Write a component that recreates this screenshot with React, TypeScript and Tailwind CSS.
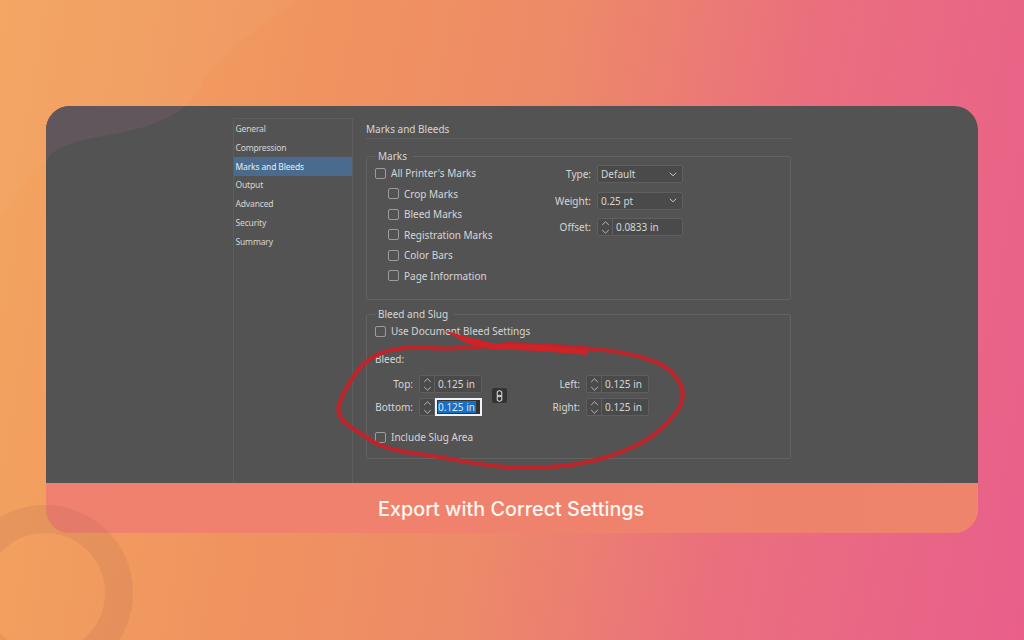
import type { ReactNode } from "react";

const blob =
  "M300 0C270 18 226 50 206 76C197 96 188 106 176 113C142 134 100 134 72 143C56 149 49 154 46 162C30 178 14 196 0 218L0 0Z";

const loop: [number, number][] = [
  [510, 344], [453, 350], [407, 346], [368, 356], [344, 390], [335, 416], [361, 434], [385, 449],
  [440, 457], [507, 469], [575, 466], [625, 452], [662, 431], [688, 397], [670, 366], [625, 352],
  [573, 347], [510, 344],
];

// smooth hand-drawn looking line through the points
const curve = (pts: [number, number][]) => {
  let d = `M${pts[0][0]} ${pts[0][1]}`;
  for (let i = 1; i < pts.length - 1; i++) {
    const mx = (pts[i][0] + pts[i + 1][0]) / 2;
    const my = (pts[i][1] + pts[i + 1][1]) / 2;
    d += `Q${pts[i][0]} ${pts[i][1]} ${mx} ${my}`;
  }
  const last = pts[pts.length - 1];
  return `${d}L${last[0]} ${last[1]}`;
};

const sections = ["General", "Compression", "Marks and Bleeds", "Output", "Advanced", "Security", "Summary"];
const markRows = ["Crop Marks", "Bleed Marks", "Registration Marks", "Color Bars", "Page Information"];

const Check = ({ label, className = "" }: { label: string; className?: string }) => (
  <div className={`flex items-center gap-[5px] ${className}`}>
    <span className="w-[11px] h-[11px] border border-[#9c9c9c] rounded-[2px] shrink-0" />
    <span>{label}</span>
  </div>
);

const Arrows = () => (
  <svg width="9" height="15" viewBox="0 0 9 15" fill="none" stroke="#c4c4c4" strokeWidth="0.9">
    <path d="M1.2 5 4.5 1.8 7.8 5" />
    <path d="M1.2 10 4.5 13.2 7.8 10" />
  </svg>
);

const Spinner = ({ value, active, className = "w-[63px]" }: { value: string; active?: boolean; className?: string }) => (
  <div className={`flex h-[18px] border border-[#5f5f5f] rounded-[2px] bg-[#4a4a4a] relative ${className}`}>
    <div className="w-[15px] flex items-center justify-center border-r border-[#5f5f5f] shrink-0">
      <Arrows />
    </div>
    {active ? (
      <div className="flex-1 -my-px -mr-px flex items-center bg-[#333] border-2 border-[#eef4fa] pl-[1px]">
        <span className="bg-[#1b6fc2] text-[#d8e6f5] leading-[12px] pr-[1px]">{value}</span>
      </div>
    ) : (
      <div className="flex-1 flex items-center pl-[3px]">{value}</div>
    )}
  </div>
);

const Dropdown = ({ value }: { value: string }) => (
  <div className="flex items-center justify-between w-[86px] h-[18px] border border-[#5f5f5f] rounded-[2px] bg-[#4a4a4a] pl-[3px] pr-[5px]">
    <span>{value}</span>
    <svg width="8" height="5" viewBox="0 0 8 5" fill="none" stroke="#c4c4c4" strokeWidth="1">
      <path d="M.8 .8 4 3.8 7.2 .8" />
    </svg>
  </div>
);

const Group = ({ title, className, children }: { title: string; className: string; children: ReactNode }) => (
  <section className={`relative border border-[#626262] rounded-[2px] ${className}`}>
    <span className="absolute -top-[8px] left-[8px] bg-[#535353] pl-[3px] pr-[6px] leading-[14px]">{title}</span>
    {children}
  </section>
);

const Field = ({ label, width, children }: { label: string; width: string; children: ReactNode }) => (
  <div className="flex items-center gap-[6px]">
    <span className={`text-right ${width}`}>{label}</span>
    {children}
  </div>
);

export default function App() {
  return (
    <div className="relative w-[1024px] h-[640px] overflow-hidden pt-[106px] pl-[46px] bg-[linear-gradient(100deg,#f3a55f_0%,#f0935f_30%,#ed8a68_50%,#ea6f7e_72%,#e95f8b_100%)] font-['Noto_Sans',sans-serif]">
      <svg className="absolute inset-0" width="1024" height="640" viewBox="0 0 1024 640">
        <path d={blob} fill="#ffffff" opacity="0.03" />
      </svg>

      <div className="relative w-[932px] h-[427px] rounded-[24px] overflow-hidden bg-[#ef806e]">
        <div className="relative h-[377px] bg-[#535353] text-[#d6d6d6] text-[10px] leading-[14px]">
          <svg className="absolute inset-0" width="932" height="377" viewBox="46 106 932 377">
            <path d={blob} fill="#60565b" />
          </svg>
          <div className="relative flex h-full pl-[187px] pt-[12px]">
            <nav className="w-[120px] border border-b-0 border-[#5e5e5e] pt-[0.5px] text-[8.5px] tracking-[-0.15px]">
              {sections.map((s) => (
                <div
                  key={s}
                  className={`h-[18.85px] flex items-center pl-[1.5px] ${s === "Marks and Bleeds" ? "bg-[#4a6b8e] text-[#e6eef6]" : ""}`}
                >
                  {s}
                </div>
              ))}
            </nav>
            <main className="ml-[13px] w-[425px]">
              <h2 className="h-[21px] flex items-center border-b border-[#5e5e5e] pt-px">Marks and Bleeds</h2>
              <Group title="Marks" className="mt-[17px] h-[144px] flex pl-[8px] pt-[6px]">
                <div className="w-[172px]">
                  <Check label="All Printer's Marks" className="h-[20.5px]" />
                  {markRows.map((m) => (
                    <Check key={m} label={m} className="h-[20.5px] ml-[13px]" />
                  ))}
                </div>
                <div className="flex flex-col gap-[8.5px] pt-[2px] ml-[4px]">
                  <Field label="Type:" width="w-[40px]"><Dropdown value="Default" /></Field>
                  <Field label="Weight:" width="w-[40px]"><Dropdown value="0.25 pt" /></Field>
                  <Field label="Offset:" width="w-[40px]"><Spinner value="0.0833 in" className="w-[86px]" /></Field>
                </div>
              </Group>
              <Group title="Bleed and Slug" className="mt-[14px] h-[145px] pt-[9px]">
                <Check label="Use Document Bleed Settings" className="ml-[8px] h-[14px]" />
                <p className="ml-[8px] mt-[14px]">Bleed:</p>
                <div className="flex items-center mt-[9px]">
                  <div className="flex flex-col gap-[5px]">
                    <Field label="Top:" width="w-[46px]"><Spinner value="0.125 in" /></Field>
                    <Field label="Bottom:" width="w-[46px]"><Spinner value="0.125 in" active /></Field>
                  </div>
                  <div className="w-[15px] h-[15px] ml-[10px] rounded-[2px] bg-[#333333] flex items-center justify-center">
                    <svg width="7" height="12" viewBox="0 0 7 12" fill="none" stroke="#d0d0d0" strokeWidth="1.1">
                      <rect x="1.2" y="0.8" width="4.6" height="6" rx="2.2" />
                      <rect x="1.2" y="5.2" width="4.6" height="6" rx="2.2" />
                    </svg>
                  </div>
                  <div className="flex flex-col gap-[5px] ml-[1px]">
                    <Field label="Left:" width="w-[72px]"><Spinner value="0.125 in" /></Field>
                    <Field label="Right:" width="w-[72px]"><Spinner value="0.125 in" /></Field>
                  </div>
                </div>
                <Check label="Include Slug Area" className="ml-[8px] mt-[14px] h-[14px]" />
              </Group>
            </main>
          </div>
        </div>
        <div className="h-[50px] flex items-center pl-[332px] pt-[3px] bg-[linear-gradient(90deg,#f0806f,#ee846c)] text-[#fff6f0] text-[19.8px] font-medium font-['Inter',sans-serif]">
          Export with Correct Settings
        </div>
      </div>

      <svg className="absolute inset-0 pointer-events-none" width="1024" height="640" viewBox="0 0 1024 640">
        <circle cx="45" cy="593" r="74" fill="none" stroke="#a0604f" strokeOpacity="0.15" strokeWidth="28" />
        <path d={curve(loop)} fill="none" stroke="#bd252b" strokeWidth="4.2" strokeLinecap="round" />
        <path d="M443 330 468 337 492 343 540 345 587 350 587 355 540 351 490 349 466 343Z" fill="#cf2328" />
      </svg>
    </div>
  );
}
